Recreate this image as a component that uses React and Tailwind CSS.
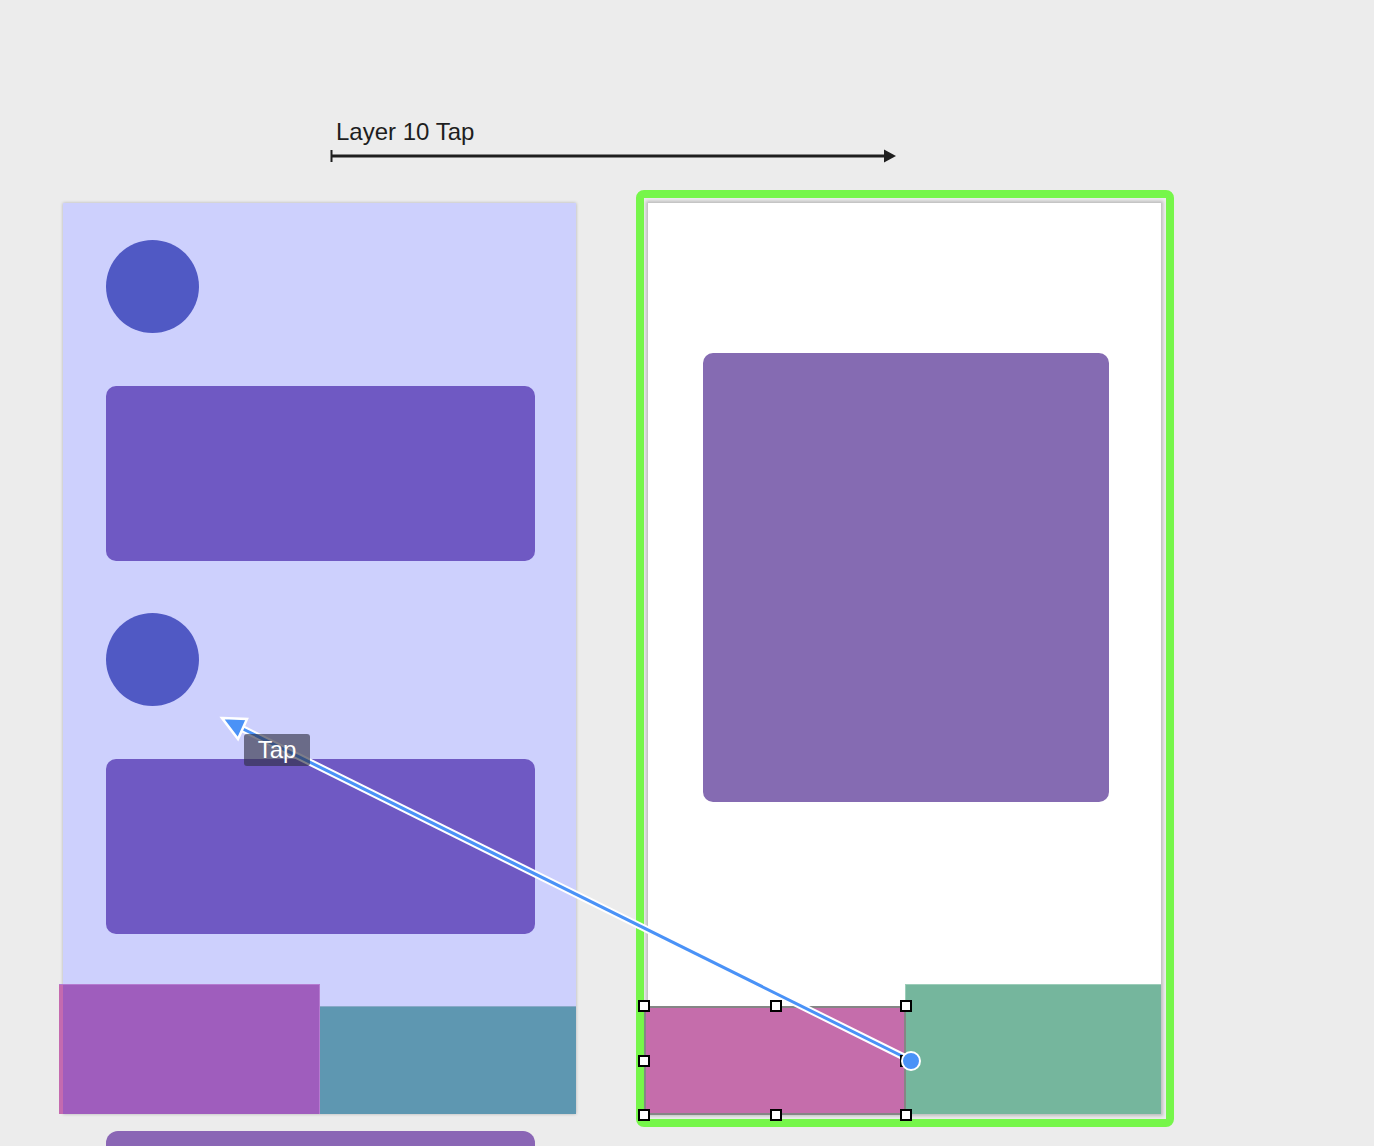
export default function App() {
  const handles = [
    [0, 0], [132, 0], [262, 0],
    [0, 55], [262, 55],
    [0, 109], [132, 109], [262, 109],
  ];

  return (
    <div
      className="relative w-[1374px] h-[1146px] bg-[#ececec] overflow-hidden"
      style={{ fontFamily: '"Liberation Sans", Arial, sans-serif' }}
    >
      {/* flow label */}
      <div className="absolute left-[330px] top-[117px] flex flex-col">
        <span className="pl-[6px] text-[24px] leading-[30px] text-[#1e1e1e]">Layer 10 Tap</span>
        <svg width="568" height="16" className="mt-[1px]">
          <line x1="1.5" y1="2" x2="1.5" y2="14" stroke="#1e1e1e" strokeWidth="2" />
          <line x1="1" y1="8" x2="556" y2="8" stroke="#1e1e1e" strokeWidth="3" />
          <polygon points="554,1.5 566,8 554,14.5" fill="#1e1e1e" />
        </svg>
      </div>

      {/* left screen */}
      <div className="absolute left-[63px] top-[203px] w-[513px] h-[911px] bg-[#cdd0fd] shadow-[0_0_3px_rgba(0,0,0,0.25)]">
        <div className="flex flex-col gap-[52.5px] pl-[43px] pt-[37px]">
          <div className="w-[93px] h-[93px] rounded-full bg-[#5059c4]" />
          <div className="w-[429px] h-[175px] rounded-[10px] bg-[#6f59c3]" />
          <div className="w-[93px] h-[93px] rounded-full bg-[#5059c4]" />
          <div className="w-[429px] h-[175px] rounded-[10px] bg-[#6f59c3]" />
        </div>
        <div className="absolute left-[-4px] top-[781px] w-[261px] h-[130px] flex border-t border-r border-[#b57bd0]">
          <div className="w-[4px] bg-[#c46aaf]" />
          <div className="flex-1 bg-[#9f5dbd]" />
        </div>
        <div className="absolute left-[257px] top-[803px] w-[256px] h-[108px] bg-[#5e97b1] border-t border-[#8aa9c8]" />
        <div className="absolute left-[43px] top-[928px] w-[429px] h-[60px] rounded-t-[12px] bg-[#8a66b5]" />
      </div>

      {/* right screen, selected */}
      <div className="absolute left-[636px] top-[190px] w-[538px] h-[937px] border-[8px] border-[#76f64a] rounded-[8px]">
        <div className="absolute left-[4px] top-[5px] w-[513px] h-[911px] bg-white shadow-[0_0_3px_2px_rgba(0,0,0,0.2)]">
          <div className="pl-[55px] pt-[150px]">
            <div className="w-[406px] h-[449px] rounded-[10px] bg-[#856bb2]" />
          </div>
          <div className="absolute left-[257px] top-[781px] w-[256px] h-[130px] bg-[#75b69d] border-t border-l border-[#9ccdb9]" />
          <div className="absolute left-[-4px] top-[803px] w-[262px] h-[109px] bg-[#c56dab] border-2 border-[#858585]" />
        </div>
      </div>

      {/* tap connection */}
      <svg className="absolute inset-0 pointer-events-none" width="1374" height="1146">
        <line x1="910" y1="1060" x2="241" y2="728" stroke="#ffffff" strokeWidth="7" />
        <line x1="910" y1="1060" x2="241" y2="728" stroke="#4a92f7" strokeWidth="3" />
        <polygon
          points="222,718 247,719 238,739"
          fill="#4a92f7"
          stroke="#ffffff"
          strokeWidth="2.5"
          strokeLinejoin="miter"
        />
      </svg>

      <div className="absolute left-[244px] top-[734px] w-[66px] h-[32px] rounded-[3px] bg-[rgba(45,45,65,0.62)] flex items-center justify-center">
        <span className="text-[24px] leading-none text-white">Tap</span>
      </div>

      {/* selection handles */}
      {handles.map(([x, y], i) => (
        <div
          key={i}
          className="absolute w-[12px] h-[12px] bg-white border-2 border-black"
          style={{ left: 644 + x - 6, top: 1006 + y - 6 }}
        />
      ))}

      <div className="absolute left-[901px] top-[1051px] w-[20px] h-[20px] rounded-full bg-[#4a92f7] border-2 border-white" />
    </div>
  );
}
